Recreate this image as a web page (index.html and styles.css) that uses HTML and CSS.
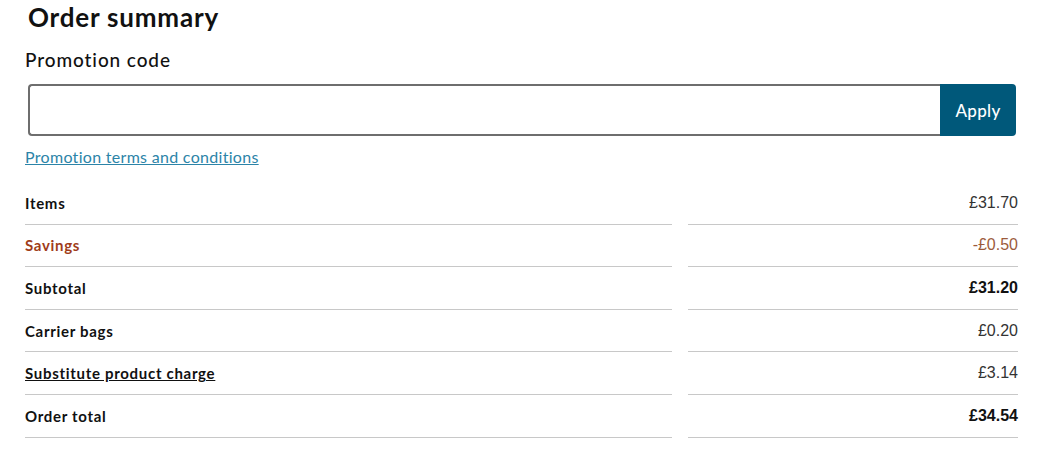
FILE: index.html
```html
<!DOCTYPE html>
<html lang="en">
<head>
    <meta charset="UTF-8">
    <meta name="viewport" content="width=device-width, initial-scale=1.0">
    <title>Order summary</title>
    <link rel="stylesheet" href="styles.css">
</head>
<body>

<div class="summary">
    <h1>Order summary</h1>

    <form class="promo" onsubmit="return false;">
        <label for="promoCode">Promotion code</label>
        <div class="promo-row">
            <input type="text" id="promoCode">
            <button type="submit">Apply</button>
        </div>
    </form>
    <a class="terms" href="#">Promotion terms and conditions</a>

    <div class="totals">
        <div class="label">Items</div>
        <div class="value">£31.70</div>

        <div class="label savings">Savings</div>
        <div class="value savings">-£0.50</div>

        <div class="label">Subtotal</div>
        <div class="value strong">£31.20</div>

        <div class="label">Carrier bags</div>
        <div class="value">£0.20</div>

        <div class="label"><a href="#">Substitute product charge</a></div>
        <div class="value">£3.14</div>

        <div class="label">Order total</div>
        <div class="value strong">£34.54</div>
    </div>
</div>

</body>
</html>
```

FILE: styles.css
```css
body {
    margin: 0;
    font-family: 'Lato', sans-serif;
    color: #111;
    background: #fff;
}
.summary {
    width: 993px;
    padding: 0 0 0 25px;
}
h1 {
    margin: 0;
    padding: 3px 0 0 3px;
    font-size: 26px;
    font-weight: 700;
    letter-spacing: 0.8px;
    line-height: 28px;
}
.promo label {
    display: block;
    margin-top: 17px;
    font-size: 19px;
    font-weight: 500;
    letter-spacing: 0.9px;
    line-height: 24px;
}
.promo-row {
    display: flex;
    margin: 12px 2px 0 3px;
    height: 52px;
}
.promo-row input {
    flex: 1;
    border: 2px solid #6e6e6e;
    border-right: none;
    border-radius: 4px 0 0 4px;
    font-size: 16px;
    padding: 0 10px;
    outline: none;
}
.promo-row button {
    width: 76px;
    border: none;
    border-radius: 0 4px 4px 0;
    background: #00587a;
    color: #fff;
    font-family: 'Lato', sans-serif;
    font-size: 17px;
    font-weight: 500;
    letter-spacing: 0.3px;
    cursor: pointer;
}
.terms {
    display: inline-block;
    margin-top: 11px;
    color: #2c84a8;
    font-size: 16px;
    letter-spacing: 0.3px;
    line-height: 20px;
}
.totals {
    display: grid;
    grid-template-columns: 1fr 330px;
    column-gap: 16px;
    margin-top: 15px;
}
.totals > div {
    height: 41.6px;
    border-bottom: 1px solid #c8c8c8;
    display: flex;
    align-items: center;
}
.label {
    font-size: 15px;
    font-weight: 700;
    letter-spacing: 0.7px;
}
.label a {
    color: #111;
}
.value {
    justify-content: flex-end;
    font-family: 'Liberation Sans', Arial, sans-serif;
    font-size: 16px;
    color: #333;
}
.value.strong {
    font-weight: 700;
    color: #111;
}
.label.savings {
    color: #a03c1a;
}
.value.savings {
    color: #9c5b3c;
}
```
